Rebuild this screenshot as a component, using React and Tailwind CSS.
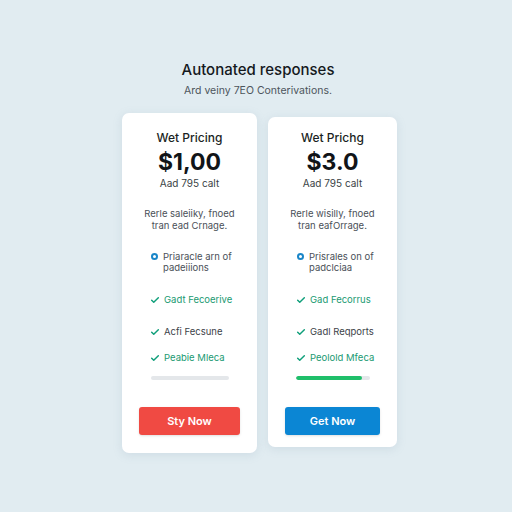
import React from 'react';

const Check = () => (
  <svg width="10" height="10" viewBox="0 0 24 24" fill="none" stroke="#0f9f7a" strokeWidth="3.5" strokeLinecap="round" strokeLinejoin="round" className="shrink-0">
    <path d="M4 12.5l5 5L20 6.5" />
  </svg>
);

const plans = [
  {
    name: 'Wet Pricing',
    price: '$1,00',
    sub: 'Aad 795 calt',
    desc: ['Rerle saleiiky, fnoed', 'tran ead Crnage.'],
    bullet: ['Priaracle arn of', 'padeiiions'],
    checks: [
      { text: 'Gadt Fecoerive', green: true },
      { text: 'Acfi Fecsune', green: false },
      { text: 'Peabie Mleca', green: true },
    ],
    progress: 0,
    button: 'Sty Now',
    btnClass: 'bg-[#f04a43] w-[101px]',
    barClass: 'w-[78px]',
    cardClass: 'w-[135px] h-[340px] pt-[17px]',
  },
  {
    name: 'Wet Prichg',
    price: '$3.0',
    sub: 'Aad 795 calt',
    desc: ['Rerle wisilly, fnoed', 'tran eafOrrage.'],
    bullet: ['Prisrales on of', 'padclciaa'],
    checks: [
      { text: 'Gad Fecorrus', green: true },
      { text: 'Gadl Reqports', green: false },
      { text: 'Peolold Mfeca', green: true },
    ],
    progress: 90,
    button: 'Get Now',
    btnClass: 'bg-[#0b86d4] w-[95px]',
    barClass: 'w-[74px]',
    cardClass: 'w-[129px] h-[330px] mt-[4px] pt-[13px]',
  },
];

const PlanCard = ({ plan }) => (
  <div className={`${plan.cardClass} bg-white rounded-[7px] shadow-[0_2px_10px_rgba(120,150,170,0.18)] flex flex-col items-center`}>
    <div className="text-[12px] leading-[16px] font-medium text-[#1b1f24]">{plan.name}</div>
    <div className="text-[23px] leading-[28px] font-bold text-[#111418] mt-[2px]">{plan.price}</div>
    <div className="text-[10px] leading-[13px] text-[#3a3f45] mt-[1px]">{plan.sub}</div>
    <div className="text-[9.5px] leading-[12px] text-[#4a5058] text-center mt-[18px]">
      {plan.desc.map((l) => (
        <div key={l}>{l}</div>
      ))}
    </div>
    <div className="w-full pl-[29px] pr-3 mt-[19px] flex items-start gap-[5px]">
      <span className="mt-[2px] w-[7px] h-[7px] rounded-full border-[2px] border-[#1a86c8] shrink-0" />
      <div className="text-[9.5px] leading-[11px] text-[#4a5058]">
        {plan.bullet.map((l) => (
          <div key={l}>{l}</div>
        ))}
      </div>
    </div>
    <div className="w-full pl-[28px] flex flex-col mt-[21px]">
      {plan.checks.map((c, i) => (
        <div key={c.text} className={`flex items-center gap-[4px] ${i === 1 ? 'mt-[20px]' : i === 2 ? 'mt-[14px]' : ''}`}>
          <Check />
          <span className={`text-[9.5px] leading-[12px] ${c.green ? 'text-[#1a9a72]' : 'text-[#3c4248]'}`}>{c.text}</span>
        </div>
      ))}
    </div>
    <div className={`${plan.barClass} h-[4px] rounded-full bg-[#e4e7ea] mt-[12px] overflow-hidden`}>
      <div className="h-full rounded-full bg-[#1fbf6a]" style={{ width: `${plan.progress}%` }} />
    </div>
    <button className={`${plan.btnClass} text-white text-[11px] font-semibold h-[28px] rounded-[3px] mt-[27px] shadow-sm`}>
      {plan.button}
    </button>
  </div>
);

export default function App() {
  return (
    <div className="w-[512px] h-[512px] bg-[#e1ecf1] flex flex-col items-center pt-[60px] pl-[4px]" style={{ fontFamily: 'Inter, "Open Sans", sans-serif' }}>
      <h1 className="text-[15px] leading-[20px] font-medium text-[#15191d]">Autonated responses</h1>
      <p className="text-[10.5px] leading-[14px] text-[#4d555c] mt-[4px]">Ard veiny 7EO Conterivations.</p>
      <div className="flex items-start gap-[11px] mt-[15px] ml-[3px]">
        {plans.map((p) => (
          <PlanCard key={p.price} plan={p} />
        ))}
      </div>
    </div>
  );
}
